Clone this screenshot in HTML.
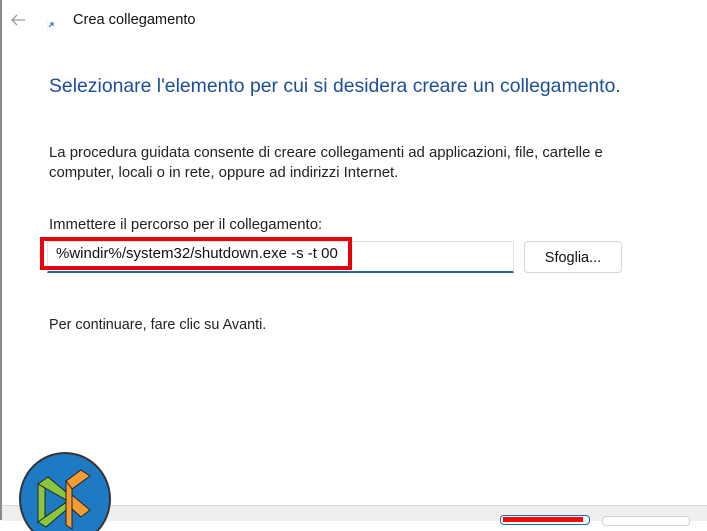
<!DOCTYPE html>
<html><head><meta charset="utf-8"><style>
body{margin:0;width:707px;height:520px;overflow:hidden;background:#fff;font-family:"Liberation Sans",sans-serif;position:relative;color:#1a1a1a}
.abs{position:absolute;white-space:nowrap}
</style></head><body>
<div class="abs" style="left:0;top:0;width:2px;height:520px;background:#8a8a8a"></div>
<svg class="abs" style="top:13px;left:10px" width="16" height="14"><path d="M15 7H2M7 2L2 7l5 5" stroke="#9a9a9a" stroke-width="1.3" fill="none"/></svg>
<svg class="abs" style="left:47px;top:21px" width="8" height="8"><rect x="0" y="0" width="8" height="8" fill="#fff" stroke="#cfe3f5" stroke-width="0.7"/><path d="M2 6L6 2M3 2h3v3" stroke="#1e74c8" stroke-width="1.1" fill="none"/></svg>
<div class="abs" style="left:73px;top:12px;font-size:14.6px;color:#111">Crea collegamento</div>
<div class="abs" style="left:49px;top:75px;font-size:19.4px;color:#1c4e9a">Selezionare l'elemento per cui si desidera creare un collegamento.</div>
<div class="abs" style="left:49px;top:143px;font-size:14.9px;line-height:20px;color:#222">La procedura guidata consente di creare collegamenti ad applicazioni, file, cartelle e<br>computer, locali o in rete, oppure ad indirizzi Internet.</div>
<div class="abs" style="left:49px;top:217px;font-size:14.9px;color:#222">Immettere il percorso per il collegamento:</div>
<div class="abs" style="left:47px;top:241px;width:467px;height:32px;border:1px solid #e2e2e2;border-bottom:2px solid #1f6aa5;box-sizing:border-box"></div>
<div class="abs" style="left:40px;top:237px;width:312px;height:33px;border:4px solid #e8000b;box-sizing:border-box"></div>
<div class="abs" style="left:56px;top:245px;font-size:15px;color:#111">%windir%/system32/shutdown.exe -s -t 00</div>
<div class="abs" style="left:524px;top:241px;width:98px;height:32px;border:1px solid #d6d6d6;border-radius:4px;box-sizing:border-box;font-size:14.5px;text-align:center;line-height:32px;color:#111">Sfoglia...</div>
<div class="abs" style="left:49px;top:317px;font-size:14.4px;color:#222">Per continuare, fare clic su Avanti.</div>
<div class="abs" style="left:2px;top:505px;width:705px;height:15px;background:#efefef;border-top:1px solid #dadada"></div>
<div class="abs" style="left:500px;top:515px;width:90px;height:10px;border:1px solid #1f6aa5;border-radius:4px;background:#fff;box-sizing:border-box"></div>
<div class="abs" style="left:503px;top:517px;width:80px;height:5px;background:#f10a0a"></div>
<div class="abs" style="left:602px;top:516px;width:88px;height:10px;border:1px solid #d0d0d0;border-radius:4px;background:#fff;box-sizing:border-box"></div>
<svg class="abs" style="left:18px;top:451px" width="96" height="80">
<ellipse cx="47" cy="48" rx="45" ry="46" fill="#1f7ac4" stroke="#333" stroke-width="2"/>
<path d="M20 33l10-7 24 20-4 4z" fill="#8cc63f" stroke="#222" stroke-width="1"/>
<path d="M20 33l7 4v30l-7 4z" fill="#8cc63f" stroke="#222" stroke-width="1"/>
<path d="M20 71l30-21 4 4-26 22z" fill="#8cc63f" stroke="#222" stroke-width="1"/>
<path d="M48 30l15-11 9 6-18 13z" fill="#f39c33" stroke="#222" stroke-width="1"/>
<path d="M48 30l6 8v40l-6-4z" fill="#f39c33" stroke="#222" stroke-width="1"/>
<path d="M54 44l18 15-9 7-9-8z" fill="#f39c33" stroke="#222" stroke-width="1"/>
</svg>
</body></html>
